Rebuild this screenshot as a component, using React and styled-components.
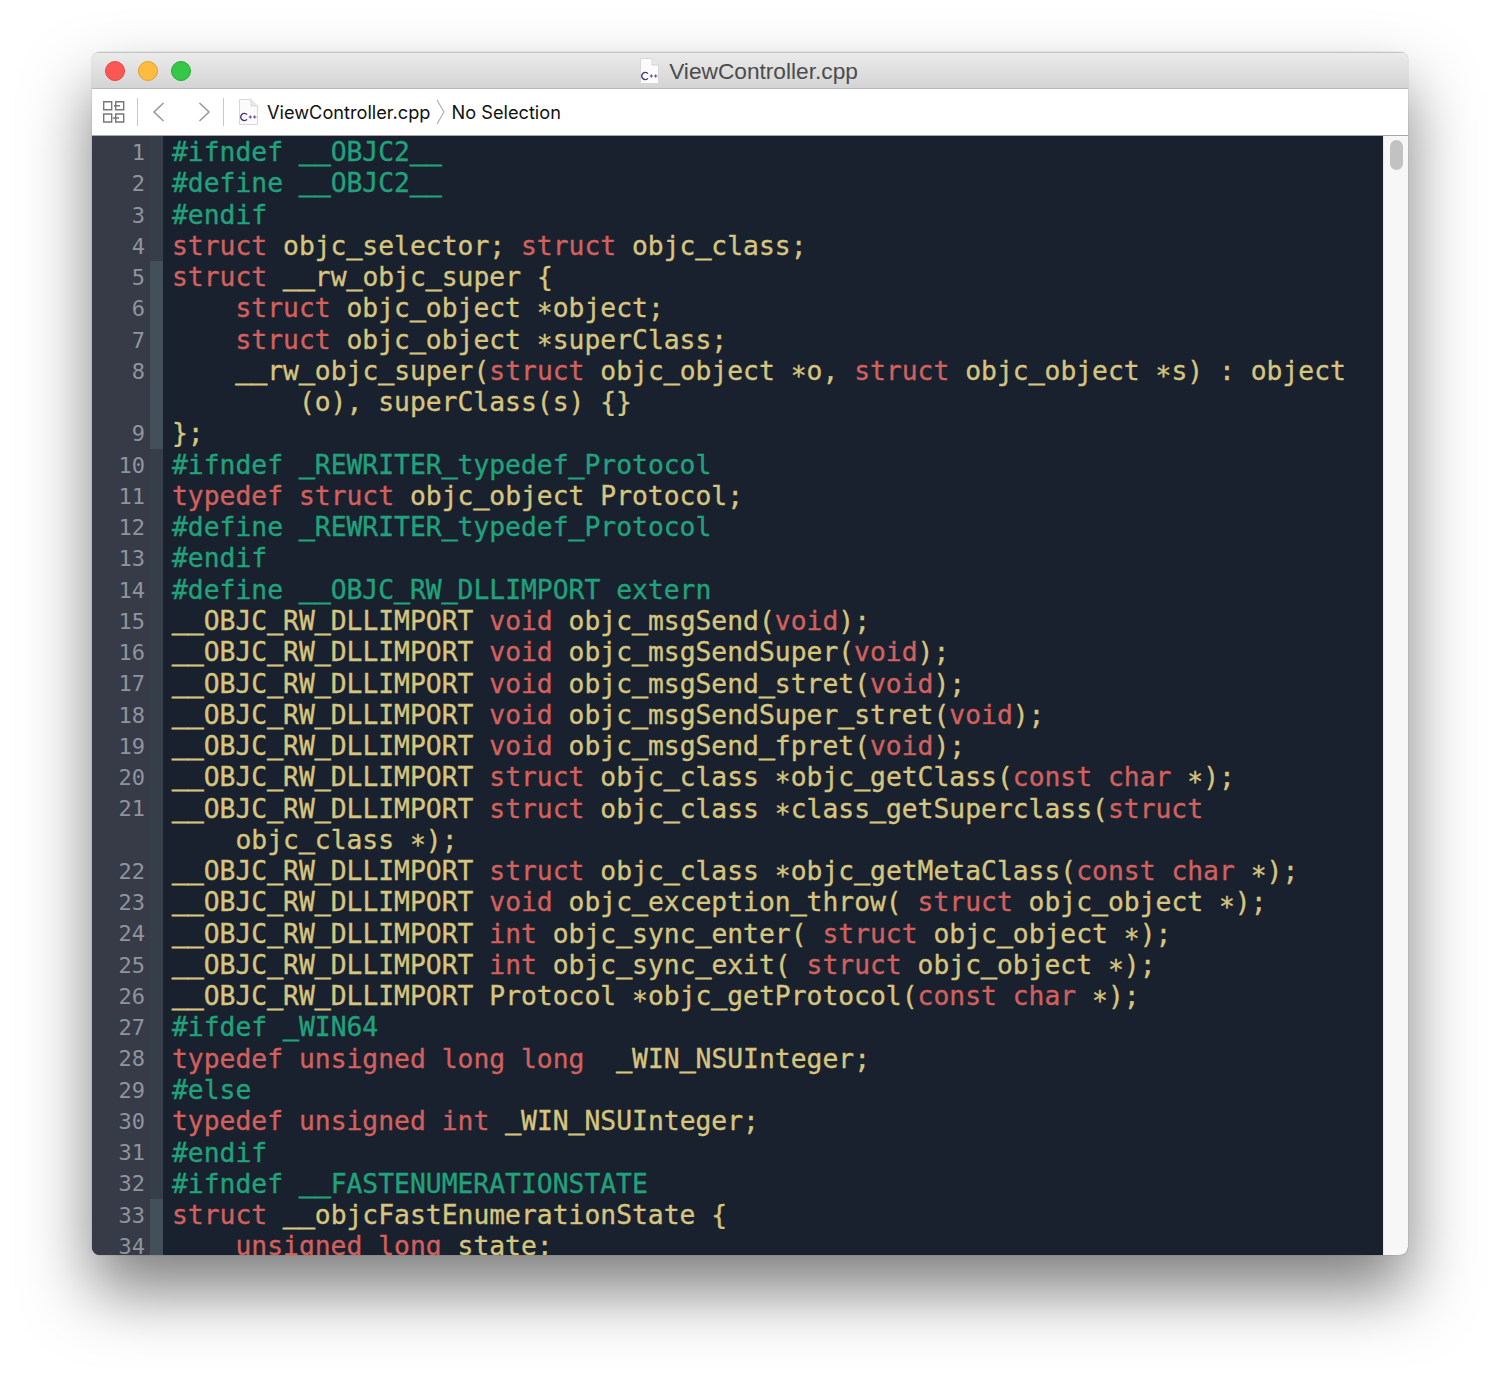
import React from "react";
import styled, { createGlobalStyle } from "styled-components";

const GlobalStyle = createGlobalStyle`
    html, body {
        margin: 0;
        padding: 0;
        background: #fff;
    }
`;

const LINE_HEIGHT = 31.26;

const SOURCE = [
    "#ifndef __OBJC2__",
    "#define __OBJC2__",
    "#endif",
    "struct objc_selector; struct objc_class;",
    "struct __rw_objc_super {",
    "    struct objc_object *object;",
    "    struct objc_object *superClass;",
    "    __rw_objc_super(struct objc_object *o, struct objc_object *s) : object\n        (o), superClass(s) {}",
    "};",
    "#ifndef _REWRITER_typedef_Protocol",
    "typedef struct objc_object Protocol;",
    "#define _REWRITER_typedef_Protocol",
    "#endif",
    "#define __OBJC_RW_DLLIMPORT extern",
    "__OBJC_RW_DLLIMPORT void objc_msgSend(void);",
    "__OBJC_RW_DLLIMPORT void objc_msgSendSuper(void);",
    "__OBJC_RW_DLLIMPORT void objc_msgSend_stret(void);",
    "__OBJC_RW_DLLIMPORT void objc_msgSendSuper_stret(void);",
    "__OBJC_RW_DLLIMPORT void objc_msgSend_fpret(void);",
    "__OBJC_RW_DLLIMPORT struct objc_class *objc_getClass(const char *);",
    "__OBJC_RW_DLLIMPORT struct objc_class *class_getSuperclass(struct\n    objc_class *);",
    "__OBJC_RW_DLLIMPORT struct objc_class *objc_getMetaClass(const char *);",
    "__OBJC_RW_DLLIMPORT void objc_exception_throw( struct objc_object *);",
    "__OBJC_RW_DLLIMPORT int objc_sync_enter( struct objc_object *);",
    "__OBJC_RW_DLLIMPORT int objc_sync_exit( struct objc_object *);",
    "__OBJC_RW_DLLIMPORT Protocol *objc_getProtocol(const char *);",
    "#ifdef _WIN64",
    "typedef unsigned long long  _WIN_NSUInteger;",
    "#else",
    "typedef unsigned int _WIN_NSUInteger;",
    "#endif",
    "#ifndef __FASTENUMERATIONSTATE",
    "struct __objcFastEnumerationState {",
    "    unsigned long state;",
];

// marks in the change bar next to the gutter
const STRIPES = [
    { height: 125, light: false },
    { height: 188, light: true },
    { height: 750, light: false },
    { height: 56, light: true },
];

const KEYWORDS = ["struct", "typedef", "void", "const", "char", "int", "unsigned", "long"];
const TOKENS = /(\*|_+)/;
const WORDS = new RegExp(`\\b(${KEYWORDS.join("|")})(?![A-Za-z0-9_])`);

function renderMarks(text) {
    return text.split(TOKENS).map((part, index) => {
        if (index % 2 === 0) return part;
        return part === "*" ? <Star key={index}>*</Star> : <Underscore key={index}>{part}</Underscore>;
    });
}

function renderCode(text) {
    if (text.startsWith("#")) {
        return <Directive>{renderMarks(text)}</Directive>;
    }
    return text.split(WORDS).map((part, index) =>
        index % 2 === 1 ? <Keyword key={index}>{part}</Keyword> : <span key={index}>{renderMarks(part)}</span>
    );
}

function CppIcon() {
    return (
        <svg width="20" height="26" viewBox="0 0 20 26">
            <path d="M1.5 .5H13L19.5 7V25.5H1.5Z" fill="#fbfbfb" stroke="#d8d8d8" />
            <path d="M13 .5V7H19.5" fill="#e8e8e8" stroke="#d8d8d8" />
            <path d="M9 15.6A3.6 3.6 0 1 0 9 20.4" fill="none" stroke="#40307f" strokeWidth="1.4" />
            <path d="M10.6 18h3.4M12.3 16.3v3.4M15 18h3.4M16.7 16.3v3.4" stroke="#40307f" strokeWidth=".8" />
        </svg>
    );
}

export default function App() {
    return (
        <Page>
            <GlobalStyle />
            <Window>
                <TitleBar>
                    <Lights>
                        <Light $color="#fc5753" $edge="#df4744" />
                        <Light $color="#fdbc40" $edge="#de9f34" />
                        <Light $color="#34c748" $edge="#27aa35" />
                    </Lights>
                    <CppIcon />
                    <WindowTitle>ViewController.cpp</WindowTitle>
                </TitleBar>
                <Toolbar>
                    <svg width="22" height="22" viewBox="0 0 22 22" fill="none" stroke="#777" strokeWidth="1.4">
                        <path d="M.7.7h8v8h-8zM.7 13h8v8h-8zM12.7 13h8v8h-8zM12.7.7h8v8h-8zM11 4.7h6M10 17h6" />
                    </svg>
                    <Divider />
                    <NavButtons>
                        <svg width="13" height="22" viewBox="0 0 13 22" fill="none" stroke="#999" strokeWidth="1.6">
                            <path d="M11.5 2 2 11l9.5 9" />
                        </svg>
                        <svg width="13" height="22" viewBox="0 0 13 22" fill="none" stroke="#999" strokeWidth="1.6">
                            <path d="M1.5 2 11 11l-9.5 9" />
                        </svg>
                    </NavButtons>
                    <Divider />
                    <Crumbs>
                        <CppIcon />
                        <Crumb>ViewController.cpp</Crumb>
                        <svg width="9" height="26" viewBox="0 0 9 26" fill="none" stroke="#aaa" strokeWidth="1.1">
                            <path d="M1 1l7 12-7 12" />
                        </svg>
                        <Crumb>No Selection</Crumb>
                    </Crumbs>
                </Toolbar>
                <Editor>
                    <Gutter>
                        {SOURCE.map((line, index) => (
                            <LineNumber key={index} $rows={line.split("\n").length}>
                                {index + 1}
                            </LineNumber>
                        ))}
                    </Gutter>
                    <ChangeBar>
                        {STRIPES.map((stripe, index) => (
                            <Stripe key={index} $height={stripe.height} $light={stripe.light} />
                        ))}
                    </ChangeBar>
                    <CodeArea>
                        {SOURCE.map((line, index) => (
                            <Code key={index}>{renderCode(line)}</Code>
                        ))}
                    </CodeArea>
                    <ScrollTrack>
                        <ScrollThumb />
                    </ScrollTrack>
                </Editor>
            </Window>
        </Page>
    );
}

const Page = styled.div`
    box-sizing: border-box;
    width: 1500px;
    height: 1387px;
    padding: 52px 92px 132px;
    overflow: hidden;
`;

const Window = styled.div`
    display: flex;
    flex-direction: column;
    height: 100%;
    border-radius: 8px;
    overflow: hidden;
    box-shadow: 0 36px 66px rgba(0, 0, 0, 0.5), 0 0 1px rgba(0, 0, 0, 0.5);
`;

const TitleBar = styled.div`
    box-sizing: border-box;
    position: relative;
    flex: none;
    display: flex;
    align-items: center;
    justify-content: center;
    gap: 10px;
    height: 37px;
    background: linear-gradient(#ebebeb, #d4d4d4);
    border-top: 1px solid #c4c4c4;
    border-bottom: 1px solid #b8b8b8;
`;

const Lights = styled.div`
    position: absolute;
    left: 13px;
    top: 8px;
    display: flex;
    gap: 13px;
`;

const Light = styled.span`
    box-sizing: border-box;
    width: 20px;
    height: 20px;
    border-radius: 50%;
    background: ${(props) => props.$color};
    border: 1px solid ${(props) => props.$edge};
`;

const WindowTitle = styled.span`
    padding-top: 2px;
    margin-right: 3px;
    font-family: "Liberation Sans", Arial, sans-serif;
    font-size: 22.7px;
    color: #4c4c4c;
`;

const Toolbar = styled.div`
    box-sizing: border-box;
    flex: none;
    display: flex;
    align-items: center;
    height: 47px;
    padding-left: 11px;
    background: #fff;
    border-bottom: 1px solid #a8a8a8;
`;

const Divider = styled.span`
    width: 1px;
    height: 28px;
    margin-left: 12px;
    background: #c8c8c8;
`;

const NavButtons = styled.div`
    display: flex;
    gap: 33px;
    margin-left: 14px;
`;

const Crumbs = styled.div`
    display: flex;
    align-items: center;
    gap: 6px;
    margin-left: 14px;

    svg:first-child {
        margin-right: 3px;
    }
`;

const Crumb = styled.span`
    font-family: Inter, "Liberation Sans", sans-serif;
    font-size: 18.2px;
    color: #111;
`;

const Editor = styled.div`
    flex: 1;
    min-height: 0;
    display: flex;
    background: #1a212e;
    overflow: hidden;
`;

const Gutter = styled.div`
    box-sizing: border-box;
    flex: none;
    width: 58px;
    padding: 1px 5px 0 0;
    background: #363b47;
    font-family: "DejaVu Sans Mono", monospace;
    font-size: 22px;
    line-height: ${LINE_HEIGHT}px;
    text-align: right;
    color: #8f949c;
`;

const LineNumber = styled.div`
    height: ${(props) => props.$rows * LINE_HEIGHT}px;
`;

const ChangeBar = styled.div`
    flex: none;
    width: 13px;
`;

const Stripe = styled.div`
    height: ${(props) => props.$height}px;
    background: ${(props) => (props.$light ? "#444f5c" : "#363e4a")};
`;

const CodeArea = styled.div`
    flex: 1;
    min-width: 0;
    padding: 1px 0 0 9px;
    overflow: hidden;
    font-family: "DejaVu Sans Mono", monospace;
    font-size: 26.35px;
    line-height: ${LINE_HEIGHT}px;
    color: #d6c57f;
    -webkit-text-stroke: 0.35px currentColor;
`;

const Code = styled.pre`
    margin: 0;
    font: inherit;
`;

const Directive = styled.span`
    color: #21a27c;
`;

const Keyword = styled.span`
    color: #d2605e;
`;

const Star = styled.span`
    vertical-align: -5px;
    line-height: 0;
`;

const Underscore = styled.span`
    vertical-align: 1px;
    line-height: 0;
    -webkit-text-stroke: 0.9px currentColor;
`;

const ScrollTrack = styled.div`
    flex: none;
    width: 25px;
    background: #f7f7f7;
    border-left: 1px solid #e8e8e8;
    box-sizing: border-box;
    padding: 4px 5px 0 6px;
`;

const ScrollThumb = styled.div`
    height: 30px;
    border-radius: 7px;
    background: #c2c2c2;
`;
